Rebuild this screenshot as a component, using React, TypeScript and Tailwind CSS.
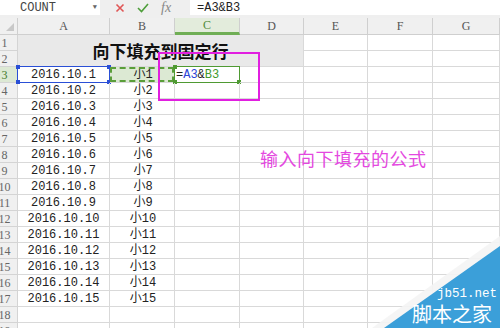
import React from 'react';

const cols = ['A', 'B', 'C', 'D', 'E', 'F', 'G'];
const rows = Array.from({ length: 19 }, (_, i) => i + 1);

const mono = { fontFamily: '"Liberation Mono", "Noto Sans CJK SC", monospace' };
const serif = { fontFamily: '"Liberation Serif", serif' };

const Handle: React.FC<{ pos: string; color: string }> = ({ pos, color }) => (
    <span className={`absolute w-[4px] h-[4px] ${pos} ${color}`} />
);

const Cell: React.FC<{ r: number; c: number }> = ({ r, c }) => {
    const base = 'relative border-r border-b border-[#d9d9d9] flex items-center justify-center text-[12px] text-[#222] overflow-visible whitespace-nowrap';
    if (r >= 3 && r <= 17 && c === 0) {
        return (
            <div className={base} style={mono}>
                2016.10.{r - 2}
                {r === 3 && (
                    <div className="absolute inset-[-1px] border-[1.5px] border-[#2a4fd6]">
                        <Handle pos="-left-[2px] -top-[2px]" color="bg-[#2a4fd6]" />
                        <Handle pos="-left-[2px] -bottom-[2px]" color="bg-[#2a4fd6]" />
                        <Handle pos="-right-[2px] -top-[2px]" color="bg-[#2a4fd6]" />
                        <Handle pos="-right-[2px] -bottom-[2px]" color="bg-[#2a4fd6]" />
                    </div>
                )}
            </div>
        );
    }
    if (r >= 3 && r <= 17 && c === 1) {
        return (
            <div className={`${base} ${r === 3 ? 'bg-[#dce9d3]' : ''}`} style={mono}>
                <span className="pl-[2px]">小{r - 2}</span>
                {r === 3 && <div className="absolute inset-[0px] border-2 border-dashed border-[#5a9e3a]" />}
            </div>
        );
    }
    if (r === 3 && c === 2) {
        return (
            <div className={`${base} justify-start`} style={mono}>
                <span className="pl-[1px] z-10">
                    =<span className="text-[#2d45d8]">A3</span>&amp;<span className="text-[#3f9a2c]">B3</span>
                </span>
                <div className="absolute inset-[-1px] border-[1.5px] border-[#4f9a33]">
                    <Handle pos="-left-[2px] -top-[2px]" color="bg-[#4f9a33]" />
                    <Handle pos="-left-[2px] -bottom-[2px]" color="bg-[#4f9a33]" />
                    <Handle pos="-right-[2px] -bottom-[2px]" color="bg-[#4f9a33]" />
                </div>
            </div>
        );
    }
    return <div className={base} />;
};

export default function App() {
    return (
        <div className="relative w-[500px] h-[328px] overflow-hidden bg-white">
            {/* formula bar */}
            <div className="h-[18px] bg-[#efefef] flex items-start">
                <div className="w-[100px] h-[15px] bg-white flex items-center pl-[20px] pr-[3px] text-[12px] text-[#444]" style={mono}>
                    <span className="flex-1">COUNT</span>
                    <span className="text-[7px] text-[#666]">▼</span>
                </div>
                <div className="w-[90px] h-[15px] flex items-center gap-[12px] pl-[15px]">
                    <svg width="10" height="10" viewBox="0 0 10 10">
                        <path d="M1.5 1.5 L8.5 8.5 M8.5 1.5 L1.5 8.5" stroke="#e05555" strokeWidth="1.6" />
                    </svg>
                    <svg width="12" height="10" viewBox="0 0 12 10">
                        <path d="M1 5 L4.5 8.5 L11 1" stroke="#4e9e3a" strokeWidth="1.6" fill="none" />
                    </svg>
                    <span className="italic text-[14px] text-[#888] leading-none" style={serif}>fx</span>
                </div>
                <div className="flex-1 h-[15px] bg-white flex items-center pl-[7px] text-[12px] text-[#222]" style={mono}>
                    =A3&amp;B3
                </div>
            </div>

            {/* sheet */}
            <div className="grid ml-[-8px] grid-cols-[26px_92px_65px_65px_64px_64px_65px_67px] grid-rows-[17px_repeat(19,16px)]">
                <div className="relative bg-[#f0f0f0] border-r border-b border-[#cfcfcf]">
                    <svg className="absolute right-[3px] bottom-[3px]" width="8" height="8" viewBox="0 0 8 8">
                        <path d="M8 0 L8 8 L0 8 Z" fill="#c8c8c8" />
                    </svg>
                </div>
                {cols.map((c) => (
                    <div
                        key={c}
                        className={`flex items-center justify-center text-[12px] border-r border-[#cfcfcf] ${
                            c === 'C'
                                ? 'bg-[#e3ecdc] text-[#4f8a3a] border-b-[3px] border-b-[#6fae55]'
                                : 'bg-[#f0f0f0] text-[#555] border-b border-b-[#cfcfcf]'
                        }`}
                        style={serif}
                    >
                        {c}
                    </div>
                ))}
                {rows.map((r) => (
                    <React.Fragment key={r}>
                        <div
                            className={`flex items-center justify-center text-[12px] border-r border-b border-[#d4d4d4] ${
                                r === 3 ? 'bg-[#dde9d4] text-[#3f7a2c]' : 'bg-[#f0f0f0] text-[#666]'
                            }`}
                            style={serif}
                        >
                            {r}
                        </div>
                        {r === 1 && (
                            <div
                                className="col-span-4 row-span-2 bg-[#e9e9e9] border-r border-b border-[#d9d9d9] flex items-center justify-center text-[17px] font-bold text-[#111]"
                                style={{ fontFamily: '"Noto Sans CJK SC", sans-serif' }}
                            >
                                向下填充到固定行
                            </div>
                        )}
                        {r <= 2 && [4, 5, 6].map((c) => <Cell key={c} r={r} c={c} />)}
                        {r > 2 && cols.map((_, c) => <Cell key={c} r={r} c={c} />)}
                    </React.Fragment>
                ))}
            </div>

            {/* annotation */}
            <div className="absolute left-[158px] top-[52px] w-[102px] h-[49px] border-2 border-[#e11fe0]" />
            <div
                className="absolute left-[260px] top-[147px] text-[18px] leading-[22px] text-[#e448e0] tracking-[0.5px]"
                style={{ fontFamily: '"Noto Sans CJK SC", sans-serif' }}
            >
                输入向下填充的公式
            </div>

            {/* watermark */}
            <svg className="absolute left-0 top-0" width="500" height="328" viewBox="0 0 500 328">
                <polygon points="500,236 500,328 372,328" fill="#f4f4f4" opacity="0.9" />
                <polygon points="500,246 500,328 384,328" fill="#3b9fd9" />
            </svg>
            <div className="absolute left-[437px] top-[288px] text-[12.5px] leading-[12px] text-white" style={mono}>
                jb51.net
            </div>
            <div
                className="absolute left-[412px] top-[304px] text-[20px] leading-[20px] text-white"
                style={{ fontFamily: '"Noto Sans CJK SC", sans-serif' }}
            >
                脚本之家
            </div>
        </div>
    );
}
